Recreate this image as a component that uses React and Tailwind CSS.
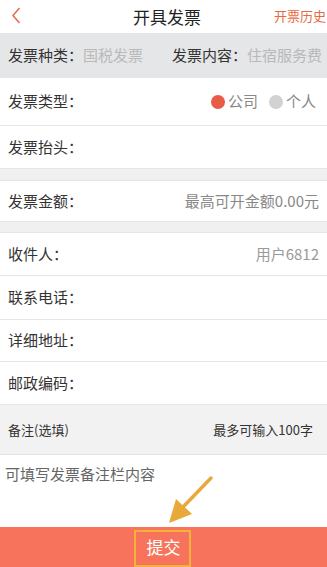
import React from "react";

const font = { fontFamily: '"Noto Sans CJK SC", "Noto Sans", sans-serif' };

function Row({ label, right, h = "h-[43px]", border = true }) {
  return (
    <div className={`flex items-center justify-between px-2 bg-white shrink-0 ${h} ${border ? "border-b border-[#e6e6e6]" : ""}`}>
      <span className="text-[15px] text-[#333] whitespace-nowrap">{label}</span>
      {right}
    </div>
  );
}

export default function App() {
  return (
    <div className="relative w-[327px] h-[567px] bg-[#f0f0f0] flex flex-col overflow-hidden" style={font}>
      {/* header */}
      <div className="relative h-[33px] bg-white flex items-center justify-center shrink-0">
        <svg className="absolute left-[11px] top-[7px]" width="10" height="17" viewBox="0 0 10 17">
          <path d="M8.5 1 L2 8.5 L8.5 16" fill="none" stroke="#e8704c" strokeWidth="1.6" />
        </svg>
        <span className="text-[17px] text-[#222] ml-[7px]">开具发票</span>
        <span className="absolute right-[1px] top-[6px] text-[13px] text-[#e8683e]">开票历史</span>
      </div>

      {/* gray info band */}
      <div className="h-[45px] bg-[#e5e6e8] flex items-center px-2 text-[15px] shrink-0 whitespace-nowrap">
        <span className="text-[#333] shrink-0">发票种类：</span>
        <span className="text-[#b9b9b9] shrink-0">国税发票</span>
        <span className="text-[#333] ml-[29px] shrink-0">发票内容：</span>
        <span className="text-[#b9b9b9] shrink-0">住宿服务费</span>
      </div>

      <Row
        label="发票类型："
        h="h-[48px]"
        right={
          <div className="flex items-center text-[15px] text-[#888] mr-[3px]">
            <span className="w-[14px] h-[14px] rounded-full bg-[#e85b44]" />
            <span className="ml-[3px]">公司</span>
            <span className="w-[14px] h-[14px] rounded-full bg-[#d2d2d2] ml-[11px]" />
            <span className="ml-[3px]">个人</span>
          </div>
        }
      />
      <Row label="发票抬头：" h="h-[43px]" />
      <div className="h-[11px] shrink-0" />
      <div className="border-t border-[#e6e6e6] shrink-0">
        <Row
          label="发票金额："
          h="h-[41px]"
          right={<span className="text-[15px] text-[#888]">最高可开金额0.00元</span>}
        />
      </div>
      <div className="h-[10px] shrink-0" />
      <div className="border-t border-[#e6e6e6] shrink-0">
        <Row
          label="收件人："
          h="h-[43px]"
          right={<span className="text-[15px] text-[#9a9a9a]">用户6812</span>}
        />
      </div>
      <Row label="联系电话：" h="h-[44px]" />
      <Row label="详细地址：" h="h-[42px]" />
      <Row label="邮政编码：" h="h-[43px]" />

      {/* remarks */}
      <div className="h-[50px] bg-[#f3f2f2] flex items-center justify-between px-2 border-b border-[#e2e2e2] shrink-0">
        <span className="text-[13px] text-[#333]">备注(选填)</span>
        <span className="text-[13px] text-[#333] mr-[6px]">最多可输入100字</span>
      </div>
      <div className="h-[72px] bg-white px-[5px] pt-[6px] shrink-0">
        <span className="text-[15px] text-[#666]">可填写发票备注栏内容</span>
      </div>

      {/* submit */}
      <div className="flex-1 bg-[#f7735c] flex items-center justify-center">
        <span className="text-[17px] text-white">提交</span>
      </div>

      {/* annotation overlay */}
      <div className="absolute left-[134px] top-[530px] w-[57px] h-[37px] border-2 border-[#f3b23a] pointer-events-none" />
      <svg className="absolute left-0 top-0 pointer-events-none" width="327" height="567" viewBox="0 0 327 567">
        <line x1="211" y1="478" x2="183" y2="507" stroke="#e9a93a" strokeWidth="3.5" strokeLinecap="round" />
        <polygon points="169,523 176,499 192,514" fill="#e9a93a" />
      </svg>
    </div>
  );
}
